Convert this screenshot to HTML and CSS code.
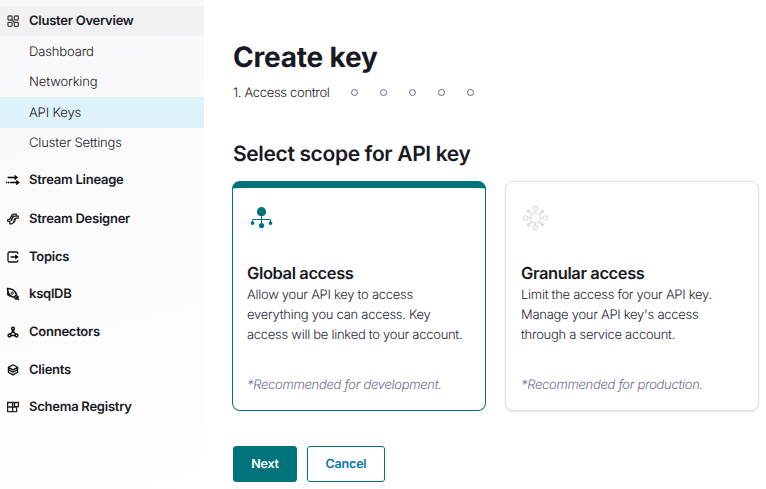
FILE: index.html
```html
<!DOCTYPE html>
<html lang="en">
<head>
<meta charset="utf-8">
<title>Create key</title>
<link rel="stylesheet" href="styles.css">
</head>
<body>
<div class="app">
  <nav class="sidebar">
    <a class="item current"><svg class="icon" viewBox="0 0 14 14"><g fill="none" stroke="#45454c" stroke-width="1.3"><rect x="2" y="2" width="4" height="4" rx=".8"/><rect x="8.300" y="2" width="4" height="4" rx=".8"/><rect x="2" y="8.300" width="4" height="4" rx=".8"/><rect x="8.300" y="8.300" width="4" height="4" rx=".8"/><path d="M5.500 5.500l3.300 3.300"/></g></svg><span>Cluster Overview</span></a>
    <div class="sub">
      <a>Dashboard</a>
      <a>Networking</a>
      <a class="active">API Keys</a>
      <a>Cluster Settings</a>
    </div>
    <div class="groups">
      <a class="item"><svg class="icon" viewBox="0 0 14 14"><path d="M1.600 4.500h8M5 9.500h6" stroke="#000" stroke-width="1.600"/><path d="M0 9.500h5" stroke="#000" stroke-width="1.400" stroke-dasharray="1.200 .6"/><path d="M8.600 1.800L12.300 4.500 8.600 7.200zM10.200 6.800L14 9.500l-3.800 2.700z"/></svg><span>Stream Lineage</span></a>
      <a class="item"><svg class="icon" viewBox="0 0 14 14"><g fill="none" stroke="#222" stroke-width="1.200"><path d="M1.500 7.600h1.300c2.700 0 1.300-5.400 5-5.400h2.500v2"/><path d="M1.700 7.600v1.900h2c3.200 0 1.400-5.300 5-5.300h3.600v2"/><path d="M3.700 9.500v2.300h1.500c4 0 1.600-5.600 5-5.600h2"/><path d="M5 8.500c2-1.500.5-4 2.500-5M7.500 10.800c2.200-1.500 1-3.500 2.500-4.500"/></g></svg><span>Stream Designer</span></a>
      <a class="item"><svg class="icon" viewBox="0 0 14 14"><path d="M11.800 4V3.600Q11.800 2 10.300 2H3.600Q2 2 2 3.600v6.800Q2 12 3.600 12h6.700q1.500 0 1.500-1.600V10M4.500 7h6" fill="none" stroke="#111" stroke-width="1.300"/><path d="M9.200 4.400L12.800 7l-3.600 2.600z"/></svg><span>Topics</span></a>
      <a class="item"><svg class="icon" viewBox="0 0 14 14"><g fill="none" stroke="#111" stroke-width="1.500"><path d="M1.500 1.500C5.300 1.500 9.300 3.600 10.500 7.800L7.900 10.400C3.700 9.200 1.500 5.300 1.500 1.500z"/><path d="M1.800 4.500v3l2.600 1.800M10.700 8.600l2 2M8.600 10.700l2 2M10 10l3 3"/><circle cx="6.200" cy="6.200" r="1.100" stroke-width="1"/></g></svg><span>ksqlDB</span></a>
      <a class="item"><svg class="icon" viewBox="0 0 14 14"><g fill="none" stroke="#111" stroke-width="1.500"><circle cx="7" cy="3.600" r="1.400"/><circle cx="3.500" cy="10.500" r="1.400"/><circle cx="10.500" cy="10.500" r="1.400"/><path d="M6.400 5v2L4.300 9.300M7.600 5v2l2.100 2.300M4.900 10.500h4.200"/></g></svg><span>Connectors</span></a>
      <a class="item"><svg class="icon" viewBox="0 0 14 14"><g fill="none" stroke="#111" stroke-width="1.300" stroke-linejoin="round"><path d="M7 1.800l4.600 2.500L7 6.900 2.400 4.300zM2.400 4.300v2.200L7 9.100l4.600-2.600V4.300M2.400 7v2.200L7 11.900l4.600-2.700V7"/></g></svg><span>Clients</span></a>
      <a class="item"><svg class="icon" viewBox="0 0 14 14"><g fill="none" stroke="#222" stroke-width="1.300"><path d="M1.600 2.500h5v9.200h-5zM6.600 7h4v4.700h-4M1.600 7h5M6.600 2.500h5.800v4.200h-3.900V2.500"/></g></svg><span>Schema Registry</span></a>
    </div>
  </nav>
  <main class="main">
    <h1>Create key</h1>
    <div class="steps"><span class="step">1. Access control</span><i></i><i></i><i></i><i></i><i></i></div>
    <h2>Select scope for API key</h2>
    <div class="cards">
      <section class="card selected">
        <svg class="art" viewBox="0 0 28 28"><g fill="#00737b"><circle cx="14.500" cy="6.700" r="4.600"/><circle cx="14.500" cy="20.600" r="2.600"/><circle cx="5.500" cy="18.100" r="1.900"/><circle cx="23.500" cy="18.100" r="1.900"/></g><path d="M14.500 10v10M5.500 18v-3.500h18V18" fill="none" stroke="#00737b" stroke-width="1"/></svg>
        <h3>Global access</h3>
        <p>Allow your API key to access<br>everything you can access. Key<br>access will be linked to your account.</p>
        <em>*Recommended for development.</em>
      </section>
      <section class="card">
        <svg class="art" viewBox="0 0 28 28"><g fill="none" stroke="#dadae5" stroke-width="1.100"><circle cx="14.500" cy="13" r="5"/><circle cx="14.500" cy="3.300" r="2.200"/><circle cx="14.500" cy="22.700" r="2.200"/><circle cx="4.600" cy="13" r="2.200"/><circle cx="24.400" cy="13" r="2.200"/><path d="M14.500 5.500V8M14.500 18v2.500M6.800 13h2.700M19.500 13h2.700M7.500 6l3.500 3.500M21.500 6L18 9.500M7.500 20l3.500-3.500M21.500 20L18 16.500"/></g><g fill="#dadae5"><circle cx="7.500" cy="6.200" r="1.800"/><circle cx="21.500" cy="6.200" r="1.800"/><circle cx="7.500" cy="19.800" r="1.800"/><circle cx="21.500" cy="19.800" r="1.800"/></g></svg>
        <h3>Granular access</h3>
        <p>Limit the access for your API key.<br>Manage your API key's access<br>through a service account.</p>
        <em>*Recommended for production.</em>
      </section>
    </div>
    <div class="actions"><button class="primary">Next</button><button class="secondary">Cancel</button></div>
  </main>
</div>
</body>
</html>
```
FILE: styles.css
```css
* { box-sizing: border-box; }
body { margin: 0; background: #fff; color: #191924; font: 300 13px/20px Inter, "Liberation Sans", sans-serif; text-rendering: geometricPrecision; }
.app { display: flex; width: 766px; height: 489px; overflow: hidden; }
.sidebar { width: 204px; padding-top: 6px; background: linear-gradient(165deg, #f8f8fa 0%, #fbfbfc 50%, #fff 100%); }
.item { display: flex; align-items: center; gap: 9px; padding-left: 6px; height: 38px; font-weight: 600; font-size: 13px; letter-spacing: -.25px; }
.item span { white-space: nowrap; }
.icon { width: 14px; height: 14px; flex: none; }
.current { height: 30px; background: #f1f1f3; }
.sub { letter-spacing: -.13px; }
.sub a { display: flex; align-items: center; height: 30px; padding-left: 29px; }
.sub a:first-child { height: 31px; }
.sub .active { height: 31px; background: #def2fa; }
.groups { display: grid; grid-template-rows: 38px 39px 37px 38px 38px 38px 36px; padding-top: 3px; }
.groups .item { height: 100%; }
.main { width: 562px; padding: 38px 7px 0 29px; }
h1, h2, h3, p { margin: 0; }
h1 { font-size: 28px; line-height: 38px; font-weight: 700; letter-spacing: -.2px; }
.steps { display: flex; align-items: center; height: 20px; margin-top: 6px; }
.step { width: 118px; padding-top: 1px; letter-spacing: -.32px; }
.steps i { width: 7px; height: 7px; margin-right: 22px; border: 1px solid #6a668f; border-radius: 50%; }
h2 { margin-top: 38px; font-size: 21px; line-height: 30px; font-weight: 600; letter-spacing: -.36px; }
.cards { display: flex; gap: 19px; margin: 11px 0 0 -1px; }
.card { display: flex; flex-direction: column; width: 254px; height: 230px; padding: 23px 0 0 15px; border: 1px solid #dedee2; border-radius: 8px; box-shadow: 0 1px 2px #0000001c; }
.card.selected { padding: 17px 0 0 14px; border-color: #00737b; border-top-width: 7px; box-shadow: none; }
.art { width: 28px; height: 28px; }
h3 { margin-top: 28px; font-size: 16.500px; line-height: 24px; font-weight: 600; letter-spacing: -.4px; }
.card p { color: #292936; letter-spacing: -.28px; }
.card em { margin-top: 30px; color: #6f6b8c; letter-spacing: -.3px; }
.actions { display: flex; gap: 10px; margin-top: 35px; }
button { height: 36px; padding: 1px 0 0; border: 1px solid #00737b; border-radius: 3px; font: 600 12.500px Inter, sans-serif; letter-spacing: -.2px; text-rendering: geometricPrecision; }
.primary { width: 64px; background: #00737b; color: #fff; }
.secondary { width: 78px; background: #fff; color: #0874a9; }
```
